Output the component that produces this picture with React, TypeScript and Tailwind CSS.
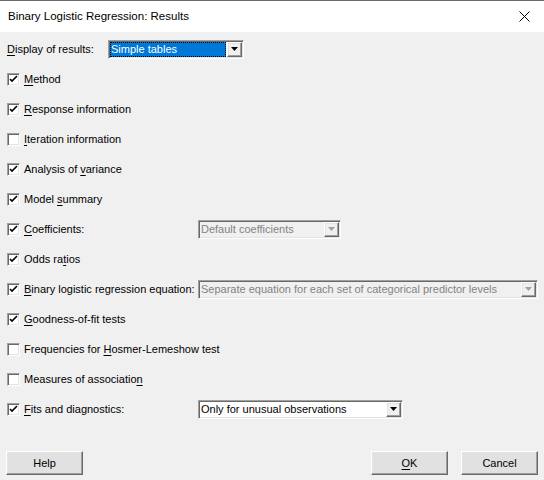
import React from 'react';

const sunken =
  'border border-t-[#a0a0a0] border-l-[#a0a0a0] border-b-white border-r-white shadow-[inset_1px_1px_0_#696969,inset_-1px_-1px_0_#e3e3e3]';
const raised =
  'border border-t-white border-l-white border-b-[#696969] border-r-[#696969] shadow-[inset_-1px_-1px_0_#a0a0a0,inset_1px_1px_0_#e3e3e3]';

// label with an access key underline
const Label = ({ text, k }: { text: string; k: number }) => (
  <span className="whitespace-nowrap">
    {text.slice(0, k)}
    <span className="underline underline-offset-2">{text[k]}</span>
    {text.slice(k + 1)}
  </span>
);

const Check = ({ on }: { on: boolean }) => (
  <span className={`w-[13px] h-[13px] bg-white ${sunken} flex items-center justify-center shrink-0`}>
    {on && (
      <svg width="9" height="9" viewBox="0 0 9 9">
        <path d="M1 4 L3 6 L8 1" stroke="#000" strokeWidth="1.6" fill="none" />
      </svg>
    )}
  </span>
);

const Arrow = ({ disabled }: { disabled?: boolean }) => (
  <span className={`w-[15px] h-full bg-[#f0f0f0] ${raised} flex items-center justify-center shrink-0`}>
    <svg width="7" height="4" viewBox="0 0 7 4">
      <path d="M0 0 H7 L3.5 4 Z" fill={disabled ? '#a0a0a0' : '#000'} />
    </svg>
  </span>
);

const Select = ({
  value,
  width,
  disabled,
  selected,
}: {
  value: string;
  width: string;
  disabled?: boolean;
  selected?: boolean;
}) => (
  <div
    className={`${width} h-[19px] ${sunken} flex items-stretch p-[1px] ${disabled ? 'bg-[#f0f0f0] text-[#838383]' : 'bg-white text-black'}`}
  >
    <div className="flex-1 min-w-0 flex items-center pr-[1px]">
      <span
        className={`w-full h-full flex items-center px-[1px] whitespace-nowrap overflow-hidden ${selected ? 'bg-[#0078d7] text-white outline-1 outline-dotted outline-black -outline-offset-1' : ''}`}
      >
        {value}
      </span>
    </div>
    <Arrow disabled={disabled} />
  </div>
);

type Row = {
  text: string;
  k: number;
  on: boolean;
  select?: { value: string; width: string; disabled?: boolean };
};

const rows: Row[] = [
  { text: 'Method', k: 0, on: true },
  { text: 'Response information', k: 0, on: true },
  { text: 'Iteration information', k: 0, on: false },
  { text: 'Analysis of variance', k: 12, on: true },
  { text: 'Model summary', k: 6, on: true },
  { text: 'Coefficients:', k: 0, on: true, select: { value: 'Default coefficients', width: 'w-[143px]', disabled: true } },
  { text: 'Odds ratios', k: 7, on: true },
  {
    text: 'Binary logistic regression equation:',
    k: 0,
    on: true,
    select: { value: 'Separate equation for each set of categorical predictor levels', width: 'w-[340px]', disabled: true },
  },
  { text: 'Goodness-of-fit tests', k: 0, on: true },
  { text: 'Frequencies for Hosmer-Lemeshow test', k: 16, on: false },
  { text: 'Measures of association', k: 22, on: false },
  { text: 'Fits and diagnostics:', k: 0, on: true, select: { value: 'Only for unusual observations', width: 'w-[205px]' } },
];

const Button = ({ children, className = '' }: { children: React.ReactNode; className?: string }) => (
  <div className={`w-[77px] h-[24px] bg-[#e1e1e1] ${raised} flex items-center justify-center ${className}`}>
    {children}
  </div>
);

export default function App() {
  return (
    <div className="w-[544px] h-[480px] bg-[#f0f0f0] text-black text-[11px] font-['Liberation_Sans',Arial,sans-serif] flex flex-col overflow-hidden">
      {/* title bar */}
      <div className="h-[32px] bg-white border-t border-t-[#6b6b6b] flex items-center justify-between pl-[8px] pr-[14px] shrink-0">
        <span className="text-[11.5px]">Binary Logistic Regression: Results</span>
        <svg width="11" height="11" viewBox="0 0 11 11">
          <path d="M0.5 0.5 L10.5 10.5 M10.5 0.5 L0.5 10.5" stroke="#000" strokeWidth="1" />
        </svg>
      </div>

      <div className="flex flex-col pl-[7px] pt-[2px]">
        <div className="h-[30px] flex items-center">
          <span className="w-[101px]">
            <Label text="Display of results:" k={0} />
          </span>
          <Select value="Simple tables" width="w-[136px]" selected />
        </div>

        {rows.map((r) => (
          <div key={r.text} className="h-[30px] flex items-center">
            <div className={`${r.select ? 'w-[191px]' : ''} flex items-center gap-[4px]`}>
              <Check on={r.on} />
              <Label text={r.text} k={r.k} />
            </div>
            {r.select && <Select {...r.select} />}
          </div>
        ))}
      </div>

      <div className="mt-[27px] flex items-center px-[6px]">
        <Button>Help</Button>
        <div className="flex-1" />
        <Button className="mr-[13px]">
          <Label text="OK" k={0} />
        </Button>
        <Button>Cancel</Button>
      </div>
    </div>
  );
}
